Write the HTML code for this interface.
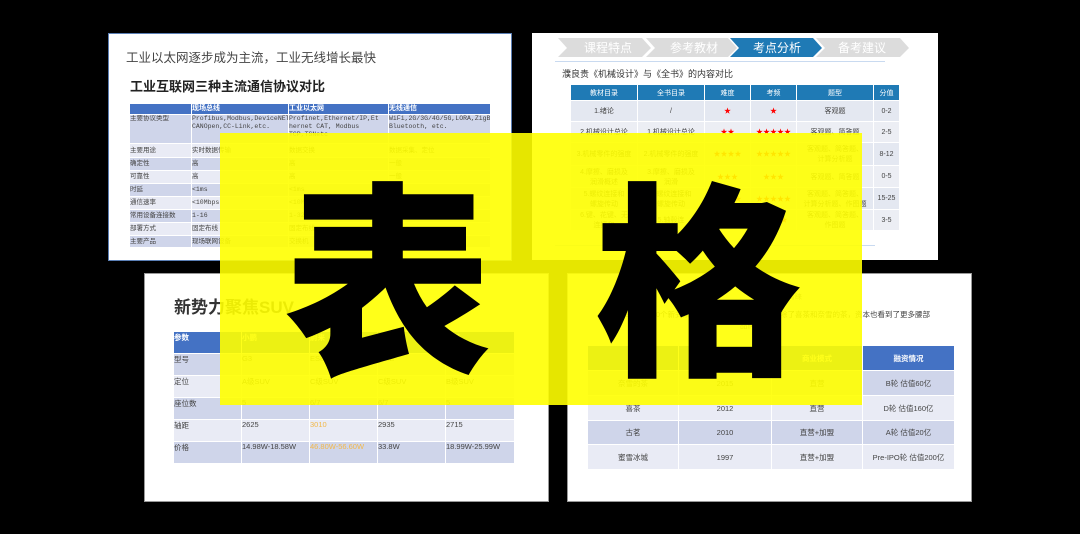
<!DOCTYPE html>
<html><head><meta charset="utf-8"><style>
*{margin:0;padding:0;box-sizing:border-box}
body{width:1080px;height:534px;background:#000;position:relative;overflow:hidden;font-family:"Liberation Sans","Noto Sans CJK SC",sans-serif;color:#333}
.s{position:absolute;background:#fff}
.a{position:absolute;white-space:nowrap}
table{position:absolute;border-collapse:collapse;table-layout:fixed}
td{border:1px solid #fff;overflow:hidden;white-space:nowrap}
.ov{position:absolute;left:220px;top:133px;width:642px;height:272px;background:rgba(255,255,0,0.9)}
.big{position:absolute;font-family:"Noto Sans CJK SC",sans-serif;font-weight:900;font-size:208px;line-height:1;color:#000}
</style></head><body>

<!-- slide 1 -->
<div class="s" style="left:108px;top:33px;width:404px;height:228px;border:1px solid #5b7fb5"></div>
<div class="a" style="left:126px;top:47px;font-size:12.5px;color:#444">工业以太网逐步成为主流，工业无线增长最快</div>
<div class="a" style="left:130px;top:76px;font-size:13px;font-weight:bold;color:#222">工业互联网三种主流通信协议对比</div>
<table style="left:129px;top:103px;width:361px;font-size:6.5px;font-family:'Liberation Mono','Noto Sans CJK SC',monospace;color:#444;line-height:8px">
<colgroup><col style="width:62px"><col style="width:97px"><col style="width:100px"><col style="width:102px"></colgroup>
<tr style="height:11px;background:#4472c4;color:#fff;font-weight:bold;font-size:7px"><td></td><td>现场总线</td><td>工业以太网</td><td>无线通信</td></tr>
<tr style="height:29px;background:#cfd5ea;vertical-align:top"><td>主要协议类型</td><td>Profibus,Modbus,DeviceNET,<br>CANOpen,CC-Link,etc.</td><td>Profinet,Ethernet/IP,Et<br>hernet CAT, Modbus<br>TCP,TSNetc</td><td>WiFi,2G/3G/4G/5G,LORA,ZigBee,<br>Bluetooth, etc.</td></tr>
<tr style="height:14px;background:#e9ebf5"><td>主要用途</td><td>实时数据传输</td><td>数据交换</td><td>数据采集、定位</td></tr>
<tr style="height:13px;background:#cfd5ea"><td>确定性</td><td>高</td><td>高</td><td>一般</td></tr>
<tr style="height:13px;background:#e9ebf5"><td>可靠性</td><td>高</td><td>高</td><td>一般</td></tr>
<tr style="height:13px;background:#cfd5ea"><td>时延</td><td>&lt;1ms</td><td>&lt;1ms</td><td></td></tr>
<tr style="height:13px;background:#e9ebf5"><td>通信速率</td><td>&lt;10Mbps</td><td>&lt;10Mbps</td><td></td></tr>
<tr style="height:13px;background:#cfd5ea"><td>常用设备连接数</td><td>1-16</td><td>1-32</td><td></td></tr>
<tr style="height:13px;background:#e9ebf5"><td>部署方式</td><td>固定布线</td><td>固定布线</td><td>部署</td></tr>
<tr style="height:12px;background:#cfd5ea"><td>主要产品</td><td>现场联网设备</td><td>交换机</td><td></td></tr>
</table>

<!-- slide 2 -->
<div class="s" style="left:532px;top:33px;width:406px;height:227px"></div>
<svg style="position:absolute;left:558px;top:38px" width="352" height="20">
<polygon points="0,0 84,0 93,10 84,19 0,19 9,10" fill="#dcdcdc"/>
<polygon points="88,0 170,0 179,10 170,19 88,19 97,10" fill="#dcdcdc"/>
<polygon points="172,0 255,0 264,10 255,19 172,19 181,10" fill="#1f7ab5"/>
<polygon points="258,0 342,0 351,10 342,19 258,19 267,10" fill="#dcdcdc"/>
<g font-family="Noto Sans CJK SC,sans-serif" font-size="12" text-anchor="middle"><text x="50" y="14" fill="#fff">课程特点</text><text x="136" y="14" fill="#fff">参考教材</text><text x="219" y="14" fill="#fff">考点分析</text><text x="304" y="14" fill="#fff">备考建议</text></g>
</svg>
<div class="a" style="left:555px;top:61px;width:330px;height:1px;background:#c9daf0"></div>
<div class="a" style="left:562px;top:67px;font-size:9px;color:#333">濮良贵《机械设计》与《全书》的内容对比</div>
<table style="left:570px;top:84px;width:329px;font-size:7px;text-align:center;color:#444">
<colgroup><col style="width:67px"><col style="width:67px"><col style="width:46px"><col style="width:46px"><col style="width:77px"><col style="width:26px"></colgroup>
<tr style="height:16px;background:#1f7ab5;color:#fff"><td>教材目录</td><td>全书目录</td><td>难度</td><td>考频</td><td>题型</td><td>分值</td></tr>
<tr style="height:21px;background:#e4e8f1"><td>1.绪论</td><td>/</td><td style="color:red">★</td><td style="color:red">★</td><td>客观题</td><td>0-2</td></tr>
<tr style="height:21px;background:#eceef4"><td>2.机械设计总论</td><td>1.机械设计总论</td><td style="color:red">★★</td><td style="color:red">★★★★★</td><td>客观题、简答题</td><td>2-5</td></tr>
<tr style="height:23px;background:#e4e8f1"><td>3.机械零件的强度</td><td>2.机械零件的强度</td><td style="color:red">★★★★</td><td style="color:red">★★★★★</td><td>客观题、简答题、<br>计算分析题</td><td>8-12</td></tr>
<tr style="height:22px;background:#eceef4"><td>4.摩擦、磨损及<br>润滑概述</td><td>3.摩擦、磨损及<br>润滑</td><td style="color:red">★★★</td><td style="color:red">★★★</td><td>客观题、简答题</td><td>0-5</td></tr>
<tr style="height:22px;background:#e4e8f1"><td>5.螺纹连接和<br>螺旋传动</td><td>4.螺纹连接和<br>螺旋传动</td><td style="color:red">★★★★</td><td style="color:red">★★★★★</td><td>客观题、简答题、<br>计算分析题、作图题</td><td>15-25</td></tr>
<tr style="height:21px;background:#eceef4"><td>6.键、花键、无<br>连接和</td><td>5.轴毂连</td><td></td><td style="color:red">★★★★</td><td>客观题、简答题、<br>作图题</td><td>3-5</td></tr>
</table>
<div class="a" style="left:555px;top:245px;width:320px;height:1px;background:#c9daf0"></div>

<!-- slide 3 -->
<div class="s" style="left:144px;top:273px;width:405px;height:229px;border:1px solid #999"></div>
<div class="a" style="left:174px;top:293px;font-size:17px;font-weight:bold;color:#333">新势力聚焦SUV</div>
<table style="left:173px;top:331px;width:341px;font-size:7.5px;color:#444">
<colgroup><col style="width:68px"><col style="width:68px"><col style="width:68px"><col style="width:68px"><col style="width:69px"></colgroup>
<tr style="height:22px;background:#4472c4;color:#fff;font-weight:bold;vertical-align:top"><td>参数</td><td>小鹏</td><td>蔚来</td><td>理想</td><td>威马</td></tr>
<tr style="height:22px;background:#cfd5ea;vertical-align:top"><td>型号</td><td>G3</td><td>ES8</td><td>ONE</td><td>EX6</td></tr>
<tr style="height:22px;background:#e9ebf5;vertical-align:top"><td>定位</td><td>A级SUV</td><td>C级SUV</td><td>C级SUV</td><td>B级SUV</td></tr>
<tr style="height:22px;background:#cfd5ea;vertical-align:top"><td>座位数</td><td>5</td><td>6/7</td><td>6/7</td><td>5</td></tr>
<tr style="height:22px;background:#e9ebf5;vertical-align:top"><td>轴距</td><td>2625</td><td style="color:#f2b84a">3010</td><td>2935</td><td>2715</td></tr>
<tr style="height:22px;background:#cfd5ea;vertical-align:top"><td>价格</td><td>14.98W-18.58W</td><td style="color:#f2b84a">46.80W-56.60W</td><td>33.8W</td><td>18.99W-25.99W</td></tr>
</table>

<!-- slide 4 -->
<div class="s" style="left:567px;top:273px;width:405px;height:229px;border:1px solid #999"></div>
<div class="a" style="left:760px;top:292px;font-size:7px;color:#555">备受资本青睐</div>
<div class="a" style="left:605px;top:309px;font-size:7.5px;color:#444;line-height:11px">近2019年超过40个新式茶饮品牌进入新式茶饮市场，除了喜茶和奈雪的茶，资本也看到了更多腰部<br>　　　　　　　　　　　　　　　　　　品牌。</div>
<table style="left:587px;top:345px;width:367px;font-size:7.5px;text-align:center;color:#444">
<colgroup><col style="width:91px"><col style="width:93px"><col style="width:91px"><col style="width:92px"></colgroup>
<tr style="height:25px;background:#4472c4;color:#fff;font-weight:bold"><td></td><td>成立时间</td><td>商业模式</td><td>融资情况</td></tr>
<tr style="height:25px;background:#cfd5ea"><td>奈雪的茶</td><td>2015</td><td>直营</td><td>B轮 估值60亿</td></tr>
<tr style="height:25px;background:#e9ebf5"><td>喜茶</td><td>2012</td><td>直营</td><td>D轮 估值160亿</td></tr>
<tr style="height:24px;background:#cfd5ea"><td>古茗</td><td>2010</td><td>直营+加盟</td><td>A轮  估值20亿</td></tr>
<tr style="height:25px;background:#e9ebf5"><td>蜜雪冰城</td><td>1997</td><td>直营+加盟</td><td>Pre-IPO轮  估值200亿</td></tr>
</table>

<!-- overlay -->
<div class="ov"></div>
<div class="big" style="left:284px;top:165px">表</div>
<div class="big" style="left:594px;top:165px">格</div>
</body></html>
